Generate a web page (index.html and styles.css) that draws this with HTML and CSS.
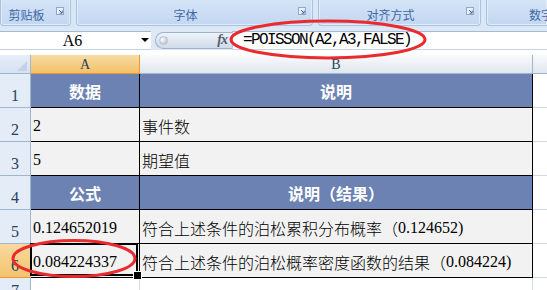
FILE: index.html
```html
<!DOCTYPE html>
<html lang="zh">
<head>
<meta charset="utf-8">
<title>POISSON</title>
<link rel="stylesheet" href="styles.css">
</head>
<body>
<div class="app">
  <div class="ribbon">
    <div class="group g1"><span class="label">剪贴板</span><svg class="launch" viewBox="0 0 8 8"><rect x="0.5" y="0.5" width="7" height="7" fill="#e9f0fa" stroke="#8ea8cb"/><path d="M3 3 L6 6 M6.2 3.5 V6.2 H3.5" fill="none" stroke="#4f6a92" stroke-width="1"/></svg></div>
    <div class="group g2"><span class="label">字体</span><svg class="launch" viewBox="0 0 8 8"><rect x="0.5" y="0.5" width="7" height="7" fill="#e9f0fa" stroke="#8ea8cb"/><path d="M3 3 L6 6 M6.2 3.5 V6.2 H3.5" fill="none" stroke="#4f6a92" stroke-width="1"/></svg></div>
    <div class="group g3"><span class="label">对齐方式</span><svg class="launch" viewBox="0 0 8 8"><rect x="0.5" y="0.5" width="7" height="7" fill="#e9f0fa" stroke="#8ea8cb"/><path d="M3 3 L6 6 M6.2 3.5 V6.2 H3.5" fill="none" stroke="#4f6a92" stroke-width="1"/></svg></div>
    <div class="group g4"><span class="label">数字</span></div>
  </div>

  <div class="fbar">
    <div class="namebox"><span class="name">A6</span><span class="arrow"></span></div>
    <div class="pill"><span class="knob"></span><span class="fx">fx</span></div>
    <div class="formula">=POISSON(A2,A3,FALSE)</div>
  </div>

  <div class="sheet">
    <div class="corner"><svg viewBox="0 0 10 10" class="tri"><polygon points="10,0 10,10 0,10" fill="#c3d2e6"/></svg></div>
    <div class="ch ch-sel">A</div>
    <div class="ch">B</div>
    <div class="ch ch-c"></div>

    <div class="rh">1</div>
    <div class="c h">数据</div>
    <div class="c h">说明</div>
    <div class="e"></div>

    <div class="rh">2</div>
    <div class="c d"><span class="num">2</span></div>
    <div class="c d"><span class="zh">事件数</span></div>
    <div class="e"></div>

    <div class="rh">3</div>
    <div class="c d"><span class="num">5</span></div>
    <div class="c d"><span class="zh">期望值</span></div>
    <div class="e"></div>

    <div class="rh">4</div>
    <div class="c h">公式</div>
    <div class="c h">说明（结果）</div>
    <div class="e"></div>

    <div class="rh">5</div>
    <div class="c d"><span class="num">0.124652019</span></div>
    <div class="c d"><span class="zh">符合上述条件的泊松累积分布概率（</span><span class="num">0.124652)</span></div>
    <div class="e"></div>

    <div class="rh rh-sel">6</div>
    <div class="c d sel"><span class="num">0.084224337</span></div>
    <div class="c d"><span class="zh">符合上述条件的泊松概率密度函数的结果（</span><span class="num">0.084224)</span></div>
    <div class="e"></div>

    <div class="rh rh7">7</div>
    <div class="w"></div>
    <div class="w"></div>
    <div class="e"></div>
  </div>

  <svg class="marks" width="547" height="290" viewBox="0 0 547 290">
    <ellipse cx="328" cy="39.5" rx="97" ry="18.5" fill="none" stroke="#ea2b2e" stroke-width="3"/>
    <ellipse cx="74" cy="258.5" rx="61" ry="18" fill="none" stroke="#ea2b2e" stroke-width="3"/>
  </svg>
</div>
</body>
</html>
```
FILE: styles.css
```css
* { box-sizing: border-box; }
html, body { margin: 0; padding: 0; background: #fff; }

.app {
  width: 547px;
  height: 290px;
  position: relative;
  overflow: hidden;
  background: #fff;
  font-family: "Noto Sans CJK SC", sans-serif;
}

/* Ribbon */
.ribbon {
  display: flex;
  gap: 5px;
  height: 28px;
  background: #d9e6f6;
}
.group {
  height: 26px;
  display: flex;
  align-items: center;
  flex-shrink: 0;
  background: linear-gradient(#d5e4f6, #c2d7f1);
  border: 1px solid #a9c2e4;
  border-top: none;
  border-radius: 0 0 4px 4px;
  box-shadow: inset 0 -1px 0 #e2ecf9, inset 1px 0 0 #e2ecf9, inset -1px 0 0 #e2ecf9;
}
.g1 { width: 71px; }
.g2 { width: 237px; }
.g3 { width: 163px; }
.g4 { flex: 1; flex-shrink: 1; min-width: 0; border-right: none; border-radius: 0 0 0 4px; }
.label {
  flex: 1;
  text-align: center;
  font-size: 12px;
  line-height: 14px;
  color: #3f67a7;
  padding-top: 4px;
  white-space: nowrap;
}
.g4 .label { text-align: left; padding-left: 42px; }
.launch {
  width: 8px;
  height: 8px;
  flex-shrink: 0;
  margin: 0 6px 4px 4px;
}

/* Formula bar */
.fbar {
  display: flex;
  align-items: center;
  height: 22px;
  padding-top: 2px;
  background: #dde8f5;
}
.namebox {
  width: 151px;
  height: 19px;
  background: #fff;
  border-top: 1px solid #a7bad5;
  border-bottom: 1px solid #c5d3e6;
  display: flex;
  align-items: center;
}
.name {
  flex: 1;
  text-align: center;
  font-family: "Liberation Serif", serif;
  font-size: 16px;
  line-height: 17px;
  color: #000;
  padding-left: 4px;
}
.arrow {
  width: 0;
  height: 0;
  border-left: 4px solid transparent;
  border-right: 4px solid transparent;
  border-top: 4px solid #000;
  margin-right: 2px;
}
.pill {
  width: 77px;
  height: 17px;
  margin-left: 4px;
  border: 1px solid #9fb3cf;
  border-right: none;
  border-radius: 9px 0 0 9px;
  background: linear-gradient(#eef3f9, #cfdbea);
  display: flex;
  align-items: center;
  padding-left: 3px;
}
.knob {
  width: 9px;
  height: 9px;
  border-radius: 50%;
  background: radial-gradient(circle at 35% 35%, #ffffff, #a9b4c2);
  border: 1px solid #b7c2d0;
}
.fx {
  margin-left: auto;
  margin-right: 5px;
  font-family: "Liberation Serif", serif;
  font-style: italic;
  font-weight: bold;
  font-size: 14px;
  color: #555d6a;
  letter-spacing: -1px;
}
.formula {
  flex: 1;
  height: 19px;
  background: #fff;
  border-top: 1px solid #a7bad5;
  border-bottom: 1px solid #c5d3e6;
  border-left: 1px solid #b9c8dc;
  padding-left: 10px;
  font-family: "Liberation Mono", monospace;
  font-size: 16px;
  letter-spacing: -1.6px;
  line-height: 17px;
  color: #000;
}

/* Sheet */
.sheet {
  margin-top: 5px;
  display: grid;
  grid-template-columns: 31px 109px 393px 14px;
  grid-template-rows: 19px repeat(6, 34px) 20px;
}
.corner {
  background: linear-gradient(#e6eef8, #d6e2f2);
  border-right: 1px solid #9eb6ce;
  border-bottom: 1px solid #9eb6ce;
  display: flex;
  align-items: flex-end;
  justify-content: flex-end;
  padding: 0 3px 2px 0;
}
.tri { width: 10px; height: 10px; }
.ch {
  background: linear-gradient(#f9fbfd, #e0e6ee);
  border-right: 1px solid #9eb6ce;
  border-bottom: 1px solid #9eb6ce;
  text-align: center;
  font-family: "Liberation Serif", serif;
  font-size: 14px;
  line-height: 18px;
  padding-top: 1px;
  color: #27415f;
}
.ch-sel {
  background: linear-gradient(#f9dba4, #f2c268);
  border-right: 1px solid #f29436;
  border-bottom: 1px solid #f29436;
}
.ch-c { border-right: none; }
.rh {
  background: #e4ecf7;
  border-right: 1px solid #9eb6ce;
  border-bottom: 1px solid #9eb6ce;
  display: flex;
  align-items: flex-end;
  justify-content: center;
  padding-bottom: 3px;
  font-family: "Liberation Serif", serif;
  font-size: 16px;
  line-height: 16px;
  color: #27415f;
}
.rh7 { align-items: flex-start; padding-top: 5px; }
.rh-sel {
  background: linear-gradient(#f9d9a0, #f3c46c);
  border-bottom-color: #f29436;
}
.c {
  border-right: 1px solid #000;
  border-bottom: 1px solid #000;
  display: flex;
  align-items: center;
  padding: 3px 0 0 2px;
  white-space: nowrap;
}
.h {
  background: #6b82b2;
  color: #fff;
  justify-content: center;
  font-weight: bold;
  font-size: 16px;
  padding: 0;
}
.d { background: #f2f2f2; }
.zh {
  font-family: "Noto Sans CJK SC", sans-serif;
  font-size: 16px;
  line-height: 18px;
  font-weight: 300;
}
.num {
  font-family: "Liberation Serif", serif;
  font-size: 16px;
  line-height: 18px;
}
.e {
  border-bottom: 1px solid #d0d7e5;
  background: #fff;
}
.w {
  border-right: 1px solid #d0d7e5;
  background: #fff;
}
.sel { position: relative; }
.sel::before {
  content: "";
  position: absolute;
  left: -1px;
  top: -1px;
  right: 1px;
  bottom: 1px;
  border: 2px solid #000;
}
.sel::after {
  content: "";
  position: absolute;
  right: -3px;
  bottom: -3px;
  width: 7px;
  height: 7px;
  background: #000;
  border: 1px solid #fff;
}

.marks {
  position: absolute;
  left: 0;
  top: 0;
  pointer-events: none;
}
```
